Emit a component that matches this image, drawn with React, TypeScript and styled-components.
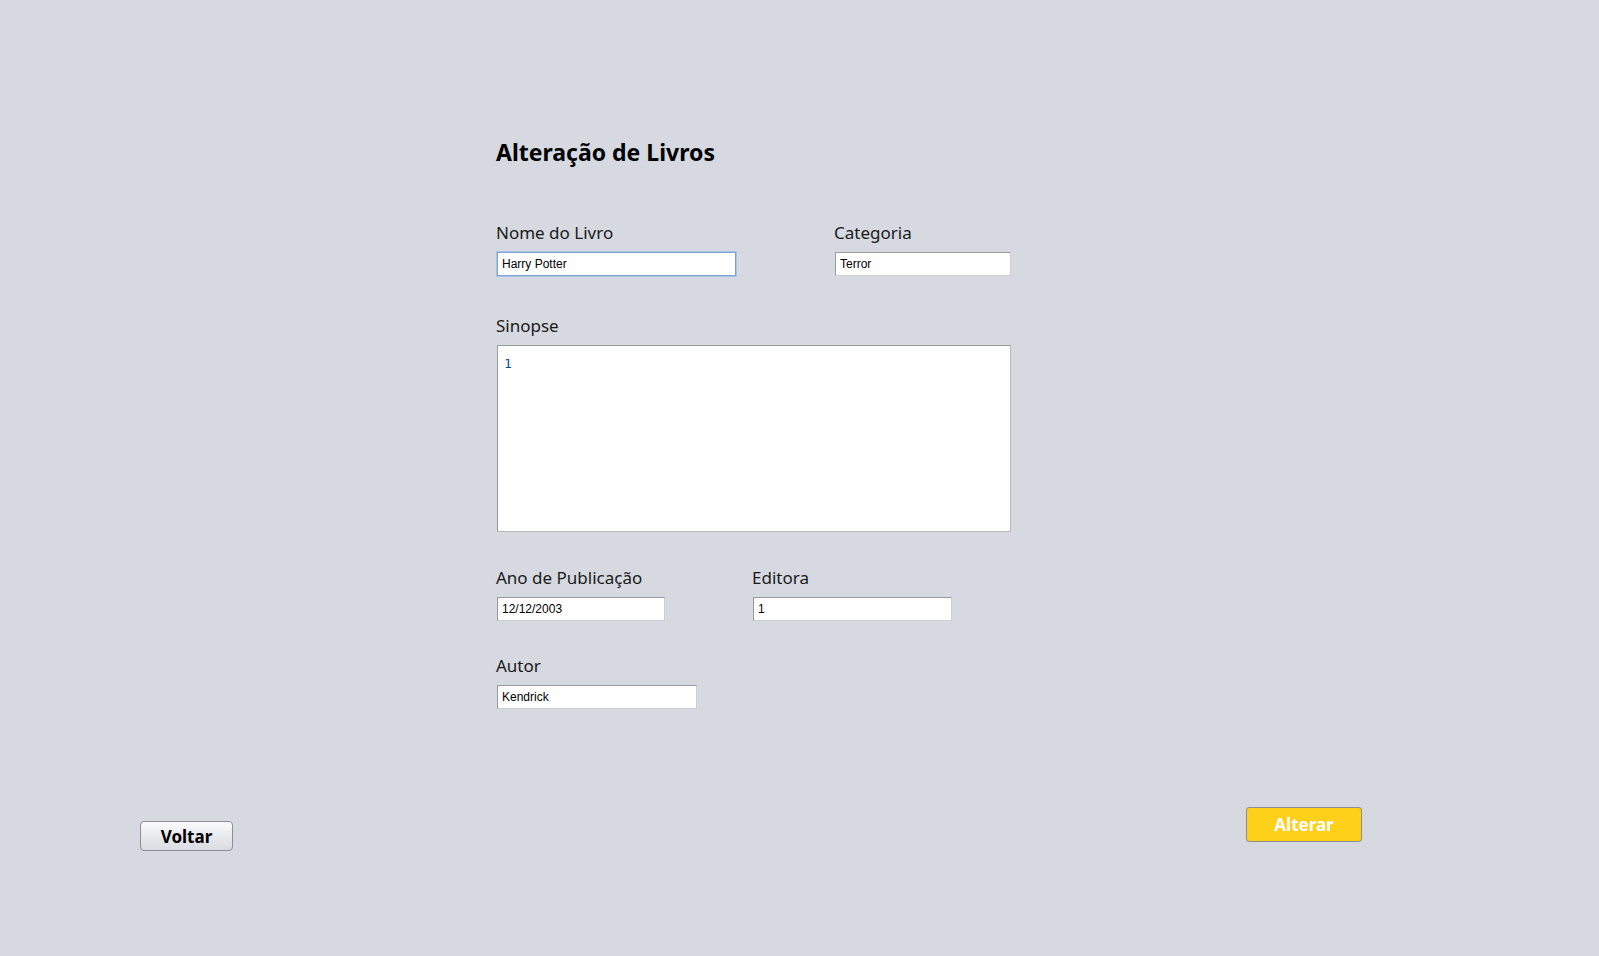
import React from "react";
import styled, { createGlobalStyle } from "styled-components";

const GlobalStyle = createGlobalStyle`
  html, body {
    margin: 0;
    padding: 0;
    background: #d6d9e0;
  }
  * {
    box-sizing: border-box;
  }
`;

const Page = styled.div`
  width: 1599px;
  height: 956px;
  background: #d6d9e0;
  font-family: "Noto Sans", "Open Sans", sans-serif;
  color: #111;
  padding-top: 136px;
  overflow: hidden;
`;

const Form = styled.div`
  margin-left: 496px;
  width: 520px;
  display: flex;
  flex-direction: column;
`;

const Title = styled.h1`
  margin: 0;
  height: 32px;
  font-size: 23px;
  line-height: 32px;
  font-weight: 700;
  color: #000;
`;

const Row = styled.div<{ $top: number }>`
  display: flex;
  margin-top: ${(p) => p.$top}px;
`;

const Field = styled.div<{ $width?: number }>`
  display: flex;
  flex-direction: column;
  width: ${(p) => (p.$width ? `${p.$width}px` : "auto")};
`;

const Label = styled.label`
  height: 24px;
  margin-bottom: 7px;
  font-size: 17px;
  line-height: 24px;
  color: #1a1a1a;
`;

const Input = styled.input<{ $width: number; $focused?: boolean }>`
  width: ${(p) => p.$width}px;
  height: 24px;
  margin-left: 1px;
  padding: 0 4px;
  font-family: "Liberation Sans", Arial, sans-serif;
  font-size: 12px;
  color: #000;
  background: #fff;
  border: 1px solid;
  border-color: #9a9a9a #cfcfcf #cfcfcf #9a9a9a;
  outline: none;
  ${(p) =>
    p.$focused &&
    `
    border-color: #7aa3d4;
    box-shadow: 0 0 0 1px #a8c4e6;
  `}
`;

const TextArea = styled.textarea`
  width: 514px;
  height: 187px;
  margin-left: 1px;
  padding: 10px 6px;
  resize: none;
  font-family: "DejaVu Sans Mono", "Liberation Mono", monospace;
  font-size: 13px;
  line-height: 16px;
  color: #0b4a9a;
  background: #fff;
  border: 1px solid;
  border-color: #9a9a9a #b8b8b8 #b8b8b8 #9a9a9a;
  outline: none;
`;

const Footer = styled.div`
  display: flex;
  justify-content: space-between;
  align-items: flex-start;
  margin-top: 98px;
  padding: 0 237px 0 140px;
`;

const BackButton = styled.button`
  margin-top: 14px;
  width: 93px;
  height: 30px;
  font-family: "Noto Sans", "Open Sans", sans-serif;
  font-size: 17px;
  font-weight: 700;
  color: #000;
  background: linear-gradient(#fbfbfc, #e6e8ec 55%, #d9dce2);
  border: 1px solid #8b8f96;
  border-radius: 4px;
  cursor: pointer;
`;

const SubmitButton = styled.button`
  width: 116px;
  height: 35px;
  font-family: "Noto Sans", "Open Sans", sans-serif;
  font-size: 17px;
  font-weight: 700;
  color: #fff;
  background: #ffd01a;
  border: 1px solid #8a8d93;
  border-radius: 3px;
  cursor: pointer;
`;

export default function App() {
  return (
    <Page>
      <GlobalStyle />
      <Form>
        <Title>Alteração de Livros</Title>

        <Row $top={53}>
          <Field $width={338}>
            <Label>Nome do Livro</Label>
            <Input $width={239} $focused defaultValue="Harry Potter" />
          </Field>
          <Field>
            <Label>Categoria</Label>
            <Input $width={176} defaultValue="Terror" />
          </Field>
        </Row>

        <Row $top={38}>
          <Field>
            <Label>Sinopse</Label>
            <TextArea defaultValue="1" />
          </Field>
        </Row>

        <Row $top={34}>
          <Field $width={256}>
            <Label>Ano de Publicação</Label>
            <Input $width={168} defaultValue="12/12/2003" />
          </Field>
          <Field>
            <Label>Editora</Label>
            <Input $width={199} defaultValue="1" />
          </Field>
        </Row>

        <Row $top={33}>
          <Field>
            <Label>Autor</Label>
            <Input $width={200} defaultValue="Kendrick" />
          </Field>
        </Row>
      </Form>

      <Footer>
        <BackButton>Voltar</BackButton>
        <SubmitButton>Alterar</SubmitButton>
      </Footer>
    </Page>
  );
}
